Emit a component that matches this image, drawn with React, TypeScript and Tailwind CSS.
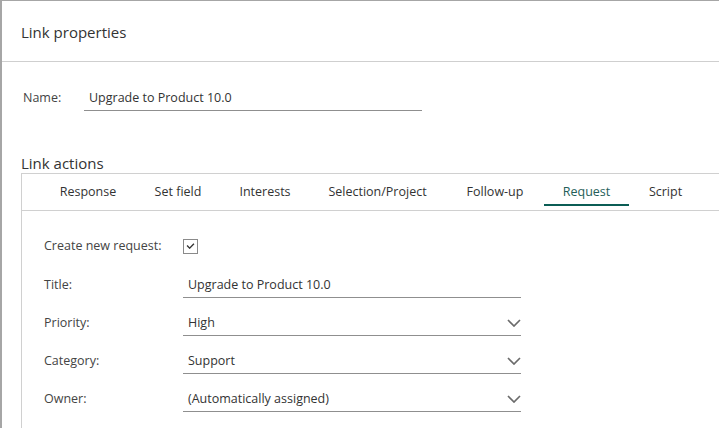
const tabs = [
  { label: "Response", width: "w-[94px]" },
  { label: "Set field", width: "w-[86px]" },
  { label: "Interests", width: "w-[88px]" },
  { label: "Selection/Project", width: "w-[137px]" },
  { label: "Follow-up", width: "w-[98px]" },
  { label: "Request", width: "w-[85px]" },
  { label: "Script", width: "w-[73px]" },
];

const rows = [
  { label: "Title:", value: "Upgrade to Product 10.0", select: false },
  { label: "Priority:", value: "High", select: true },
  { label: "Category:", value: "Support", select: true },
  { label: "Owner:", value: "(Automatically assigned)", select: true },
];

const Chevron = () => (
  <svg viewBox="0 0 14 8" className="h-[8px] w-[14px]" fill="none" stroke="#6b6b6b" strokeWidth="1.7">
    <path d="M1 1l6 6 6-6" />
  </svg>
);

const Field = ({ value, select }: { value: string; select?: boolean }) => (
  <div className="flex h-[25px] w-[338px] items-center justify-between border-b border-[#8f8f8f] pl-[5px] text-[#333]">
    <span>{value}</span>
    {select && <Chevron />}
  </div>
);

export default function App() {
  return (
    <div
      className="h-[428px] w-[719px] overflow-hidden border-l-2 border-t border-[#a6a6a6] bg-white text-[12.5px] text-[#333]"
      style={{ fontFamily: '"Open Sans", "Noto Sans", sans-serif' }}
    >
      <header className="flex h-[61px] items-center border-b border-[#cfcfcf] pl-[19px] pt-[3px]">
        <h1 className="text-[15px] text-[#333]">Link properties</h1>
      </header>

      <div className="flex items-center pl-[21px] pt-[24px]">
        <span className="w-[61px] text-[#444]">Name:</span>
        <Field value="Upgrade to Product 10.0" />
      </div>

      <h2 className="pl-[19px] pt-[42px] text-[15px] leading-[20px] text-[#333]">Link actions</h2>

      <section className="ml-[19px] h-full border-l border-t border-[#d0d0d0]">
        <nav className="flex h-[37px] border-b border-[#d0d0d0] pl-[19px]">
          {tabs.map((tab) => {
            const active = tab.label === "Request";
            return (
              <div
                key={tab.label}
                className={
                  active
                    ? `${tab.width} mb-[4px] flex items-center justify-center border-b-2 border-[#0b5d55] pt-[6px] text-[#245e59]`
                    : `${tab.width} flex items-center justify-center text-[#333]`
                }
              >
                {tab.label}
              </div>
            );
          })}
        </nav>

        <div className="pl-[22px] pt-[23px]">
          <div className="flex h-[24px] items-center">
            <span className="w-[139px] text-[#444]">Create new request:</span>
            <span className="flex h-[15px] w-[15px] items-center justify-center border border-[#8a8a8a]">
              <svg viewBox="0 0 10 7" className="h-[6px] w-[9px]" fill="none" stroke="#333" strokeWidth="1.6">
                <path d="M1 3l3 3 5-5" />
              </svg>
            </span>
          </div>

          <div className="mt-[15px] flex flex-col gap-[13px]">
            {rows.map((r) => (
              <div key={r.label} className="flex items-center">
                <span className="w-[139px] text-[#444]">{r.label}</span>
                <Field value={r.value} select={r.select} />
              </div>
            ))}
          </div>
        </div>
      </section>
    </div>
  );
}
